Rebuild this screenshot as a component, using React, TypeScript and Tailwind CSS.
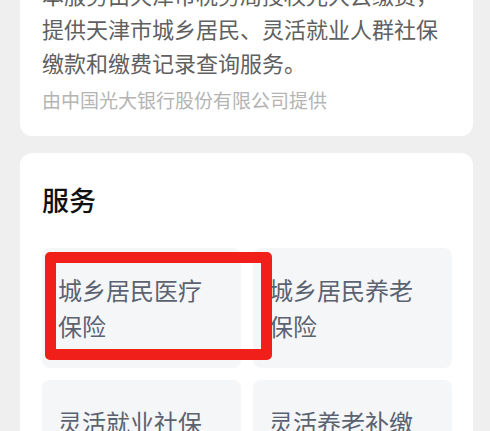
const SERVICES = ["城乡居民医疗保险", "城乡居民养老保险", "灵活就业社保", "灵活养老补缴"];

export default function App() {
  return (
    <div
      className="h-[431px] w-[490px] overflow-hidden bg-[#efefef] px-[20px]"
      style={{ fontFamily: '"Noto Sans CJK SC", "Noto Sans", sans-serif' }}
    >
      {/* Intro card, scrolled so its first line is cut off */}
      <div className="mt-[-43px] w-[453px] rounded-[12px] bg-white px-[22px] pb-[23px] pt-[20px]">
        <p className="text-[22px] leading-[34px] text-[#606060]">
          本服务由天津市税务局授权光大云缴费，提供天津市城乡居民、灵活就业人群社保缴款和缴费记录查询服务。
        </p>
        <p className="mt-[8px] text-[19px] leading-[26px] text-[#b4b4b4]">由中国光大银行股份有限公司提供</p>
      </div>

      {/* Services card */}
      <div className="mt-[17px] w-[453px] rounded-[12px] bg-white pl-[22px] pr-[21px] pt-[29px] pb-[20px]">
        <h2 className="text-[27px] font-medium leading-[36px] text-[#111]">服务</h2>
        <div className="mt-[30px] grid grid-cols-2 gap-[12px]">
          {SERVICES.map((s, i) => (
            <div
              key={s}
              className="relative h-[120px] rounded-[8px] bg-[#f5f6f7] pl-[16px] pr-[10px] pt-[24px] text-[24px] leading-[36px] text-[#5b6270]"
            >
              <span className="block w-[150px]">{s}</span>
              {i === 0 && (
                <div className="absolute left-[3px] top-[4px] z-10 h-[108px] w-[227px] rounded-[5px] border-[11px] border-[#f01f1a]" />
              )}
            </div>
          ))}
        </div>
      </div>
    </div>
  );
}
